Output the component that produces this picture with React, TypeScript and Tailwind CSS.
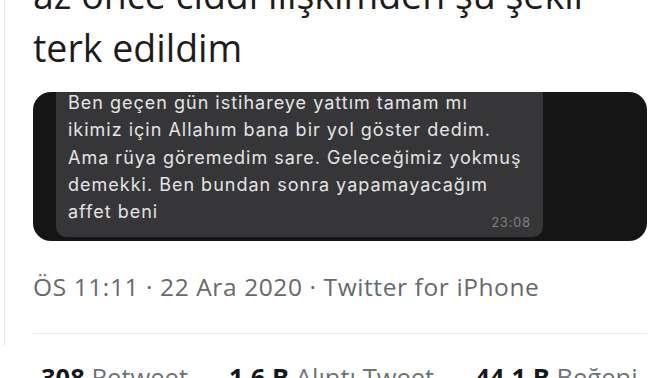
export default function App() {
  const lines = [
    'Ben geçen gün istihareye yattım tamam mı',
    'ikimiz için Allahım bana bir yol göster dedim.',
    'Ama rüya göremedim sare. Geleceğimiz yokmuş',
    'demekki. Ben bundan sonra yapamayacağım',
  ]

  const stats = [
    { value: '308', label: 'Retweet' },
    { value: '1,6 B', label: 'Alıntı Tweet' },
    { value: '44,1 B', label: 'Beğeni' },
  ]

  return (
    <div className="w-[672px] h-[378px] overflow-hidden bg-white font-['Open_Sans','Noto_Sans',sans-serif]">
      <div className="ml-[4px] h-full border-l border-[#e6e6e6] pl-[28px] pr-[25px]">
        {/* tweet text, first line is cut off by the top edge */}
        <p className="-mt-[32px] text-[37.5px] leading-[53px] text-[#1c1c1c]">
          az önce ciddi ilişkimden şu şekil
          <br />
          terk edildim
        </p>

        {/* screenshot attached to the tweet */}
        <div className="mt-[18px] flex h-[149px] w-[614px] overflow-hidden rounded-[18px] bg-[#151515]">
          <div className="ml-[23px] h-[145px] w-[487px] rounded-b-[10px] bg-[#363638] pl-[12px] pr-[12px] font-['Inter',sans-serif] text-[18px] leading-[27.3px] tracking-[1px] text-[#e4e4e4]">
            <div className="-mt-[3px]">
              {lines.map((line) => (
                <div key={line}>{line}</div>
              ))}
              <div className="flex items-start justify-between">
                <span>affet beni</span>
                <span className="mt-[18px] text-[12.5px] leading-[14px] tracking-[1px] text-[#818183]">23:08</span>
              </div>
            </div>
          </div>
        </div>

        <div className="mt-[29.5px] text-[24.5px] leading-[32px] tracking-[0.6px] text-[#66696d]">
          ÖS 11:11 · 22 Ara 2020 · Twitter for iPhone
        </div>

        <div className="mt-[30.5px] h-px w-[614px] bg-[#e9ecee]" />

        <div className="mt-[26px] flex gap-[41px] pl-[8px] text-[25.5px] leading-[34px] whitespace-nowrap">
          {stats.map((s) => (
            <span key={s.label}>
              <b className="font-bold text-[#14171a]">{s.value}</b>{' '}
              <span className="text-[#6e7377]">{s.label}</span>
            </span>
          ))}
        </div>
      </div>
    </div>
  )
}
